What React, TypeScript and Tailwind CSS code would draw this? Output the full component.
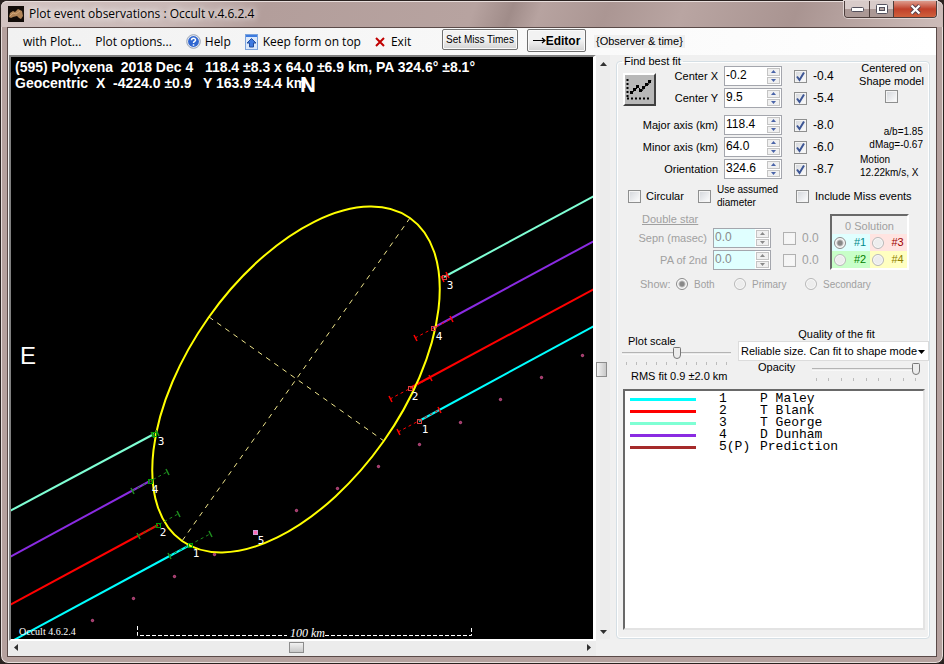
import { useState } from "react";
import type { ReactNode } from "react";

type Point = [number, number];

interface Chord {
  id: string;
  name: string;
  swatch: string;
}

const observers: Chord[] = [
  { id: "1", name: "P Maley", swatch: "bg-[#00ffff]" },
  { id: "2", name: "T Blank", swatch: "bg-[#ff0000]" },
  { id: "3", name: "T George", swatch: "bg-[#7fffd4]" },
  { id: "4", name: "D Dunham", swatch: "bg-[#8a2be2]" },
  { id: "5(P)", name: "Prediction", swatch: "bg-[#a52a2a]" },
];

const segments: { color: string; from: Point; to: Point }[] = [
  { color: "#7fffd4", from: [444, 277], to: [594, 196] },
  { color: "#8a2be2", from: [433, 328], to: [594, 241] },
  { color: "#ff0000", from: [410, 388], to: [594, 289] },
  { color: "#00ffff", from: [419, 421], to: [594, 326] },
  { color: "#7fffd4", from: [154, 434], to: [10, 511] },
  { color: "#8a2be2", from: [150, 481], to: [10, 557] },
  { color: "#ff0000", from: [158, 525], to: [10, 605] },
  { color: "#00ffff", from: [190, 545], to: [14, 640] },
];

const errorBars: { color: string; from: Point; to: Point; at: Point }[] = [
  { color: "#ff0000", from: [442, 279], to: [447, 275], at: [444, 277] },
  { color: "#ff0000", from: [415, 338], to: [451, 319], at: [433, 328] },
  { color: "#ff0000", from: [390, 399], to: [430, 378], at: [410, 388] },
  { color: "#ff0000", from: [398, 432], to: [439, 410], at: [419, 421] },
  { color: "#1e8c1e", from: [152, 435], to: [157, 433], at: [154, 434] },
  { color: "#1e8c1e", from: [132, 491], to: [167, 472], at: [150, 481] },
  { color: "#1e8c1e", from: [138, 536], to: [178, 514], at: [158, 525] },
  { color: "#1e8c1e", from: [169, 556], to: [210, 534], at: [190, 545] },
];

const predicted: Point[] = [
  [582, 355], [541, 377], [500, 399], [460, 422], [419, 444], [378, 466],
  [337, 488], [296, 510], [214, 554], [174, 576], [133, 598], [92, 620],
];

const labels: [string, number, number][] = [
  ["3", 450, 289], ["4", 439, 340], ["2", 415, 400], ["1", 425, 433],
  ["3", 161, 445], ["4", 155, 493], ["2", 163, 536], ["1", 196, 557], ["5", 261, 544],
];

function Plot() {
  return (
    <svg
      viewBox="11 57 582 582"
      preserveAspectRatio="xMidYMid slice"
      className="block h-full min-h-[582px] w-full bg-black"
      role="img"
      aria-label="Event observations plot"
    >
      {segments.map((s, i) => (
        <line key={i} x1={s.from[0]} y1={s.from[1]} x2={s.to[0]} y2={s.to[1]} stroke={s.color} strokeWidth="2" />
      ))}
      <g stroke="#f0e68c" strokeWidth="1" strokeDasharray="5 5">
        <line x1="410" y1="218" x2="182" y2="541" />
        <line x1="209" y1="317" x2="384" y2="441" />
      </g>
      <ellipse
        cx="296"
        cy="379.5"
        rx="197.7"
        ry="107.2"
        transform="rotate(-54.8 296 379.5)"
        fill="none"
        stroke="#ffff00"
        strokeWidth="2"
      />
      {errorBars.map((b, i) => (
        <g key={i} stroke={b.color} fill="none">
          <line x1={b.from[0]} y1={b.from[1]} x2={b.to[0]} y2={b.to[1]} strokeDasharray="3 3" />
          {[b.from, b.to].map(([x, y]) => (
            <line key={x} x1={x - 1} y1={y - 3} x2={x + 2} y2={y + 3} strokeWidth="1.5" />
          ))}
          <rect x={b.at[0] - 1.5} y={b.at[1] - 1.5} width="4" height="4" stroke={b.color === "#ff0000" ? "#e04040" : "#00a000"} />
        </g>
      ))}
      {predicted.map(([x, y]) => (
        <circle key={x} cx={x + 0.5} cy={y + 0.5} r="1.2" fill="#a03060" stroke="#d8609c" strokeWidth="0.8" />
      ))}
      <rect x="253.5" y="530.5" width="4" height="4" fill="#ff69b4" stroke="#c8a0d8" />

      <g fill="#ffffff" fontFamily="'DejaVu Sans Mono', monospace" fontSize="11" textAnchor="middle">
        {labels.map(([t, x, y]) => (
          <text key={`${t}-${x}`} x={x} y={y}>{t}</text>
        ))}
      </g>

      <g fill="#ffffff" fontFamily="'Liberation Sans', Arial, sans-serif" fontWeight="700">
        <text x="15" y="72" fontSize="14" className="whitespace-pre">
          {"(595) Polyxena  2018 Dec 4   118.4 ±8.3 x 64.0 ±6.9 km, PA 324.6° ±8.1°"}
        </text>
        <text x="15" y="88" fontSize="14" className="whitespace-pre">
          {"Geocentric  X  -4224.0 ±0.9   Y 163.9 ±4.4 km"}
        </text>
        <text x="300" y="92" fontSize="22">N</text>
        <text x="20" y="364" fontSize="24" fontWeight="400">E</text>
      </g>

      <path d="M137.5 626v9.5H287M325 635.5H471.5V626" fill="none" stroke="#ffffff" strokeDasharray="4 2" />
      <g fill="#ffffff" fontFamily="'Liberation Serif', 'Times New Roman', serif">
        <text x="290" y="637" fontSize="12" fontStyle="italic">100 km</text>
        <text x="19" y="635" fontSize="10">Occult 4.6.2.4</text>
      </g>
    </svg>
  );
}

function Arrow({ dir, className = "" }: { dir: "up" | "down" | "left" | "right"; className?: string }) {
  const d = {
    up: "M0 5 3.5 1 7 5z",
    down: "M0 1h7L3.5 5z",
    left: "M5 0v7L1 3.5z",
    right: "M1 0v7l4-3.5z",
  }[dir];
  const vertical = dir === "up" || dir === "down";
  return (
    <svg width={vertical ? 7 : 6} height={vertical ? 6 : 7} className={className} aria-hidden="true">
      <path d={d} fill="currentColor" />
    </svg>
  );
}

function Spin({ id, value, disabled = false }: { id: string; value: string; disabled?: boolean }) {
  const [text, setText] = useState(value);
  const step = (by: number) => setText((Number(text) + by).toFixed(1));
  return (
    <div className={`flex h-5 w-[58px] shrink-0 border border-[#a4a6ad] ${disabled ? "bg-[#e0ffff] text-[#8a8a8a]" : "bg-white"}`}>
      <input
        id={id}
        value={text}
        disabled={disabled}
        onChange={(e) => setText(e.target.value)}
        className="h-4 w-0 flex-1 bg-transparent pl-px text-xs leading-4 outline-none"
      />
      <div className={`flex w-[15px] flex-col gap-px bg-white p-px ${disabled ? "text-[#8a8a8a]" : "text-[#4a64a8]"}`}>
        <button type="button" aria-label="Increase" disabled={disabled} onClick={() => step(0.1)} className="flex flex-1 items-center justify-center border border-[#c4c4c4] bg-[#f0f0f0]">
          <svg width="5" height="3" aria-hidden="true"><path d="M0 3 2.5 0 5 3z" fill="currentColor" /></svg>
        </button>
        <button type="button" aria-label="Decrease" disabled={disabled} onClick={() => step(-0.1)} className="flex flex-1 items-center justify-center border border-[#c4c4c4] bg-[#f0f0f0]">
          <svg width="5" height="3" aria-hidden="true"><path d="M0 0h5L2.5 3z" fill="currentColor" /></svg>
        </button>
      </div>
    </div>
  );
}

function Check({ label, checked = false, disabled = false }: { label: string; checked?: boolean; disabled?: boolean }) {
  return (
    <span className="relative block size-[13px] shrink-0">
      <input
        type="checkbox"
        aria-label={label}
        defaultChecked={checked}
        disabled={disabled}
        className="peer block size-[13px] appearance-none border border-[#8e8f8f] bg-linear-to-br from-[#d2d5da] to-white shadow-[inset_0_0_0_1px_#f4f4f4] disabled:border-[#b1b1b1] disabled:from-[#f4f4f4] disabled:to-[#f8f8f8]"
      />
      <svg viewBox="0 0 13 13" className="pointer-events-none absolute inset-0 hidden size-[13px] peer-checked:block" aria-hidden="true">
        <path d="M3 6.5 5.5 10 10 2.5" fill="none" stroke="#3c5594" strokeWidth="2" />
      </svg>
    </span>
  );
}

function Radio({ name, label, checked = false }: { name: string; label: string; checked?: boolean }) {
  return (
    <input
      type="radio"
      name={name}
      aria-label={label}
      defaultChecked={checked}
      disabled
      className="size-3 shrink-0 appearance-none rounded-full border border-[#b8b8b8] bg-[#ededed] shadow-[inset_0_0_0_1px_#fafafa] checked:border-[#8c8c8c] checked:bg-[radial-gradient(circle,#888_0_2px,#f4f4f4_4px)]"
    />
  );
}

function ParamRow({ id, label, value, delta }: { id: string; label: string; value: string; delta: string }) {
  return (
    <div className="flex h-[22px] items-start">
      <label htmlFor={id} className="flex-1 pr-1.5 text-right leading-5">{label}</label>
      <Spin id={id} value={value} />
      <label className="flex h-5 w-[72px] items-center gap-1.5 pl-3 text-xs">
        <Check label={`Fit ${label}`} checked />
        {delta}
      </label>
    </div>
  );
}

function StarRow({ id, label }: { id: string; label: string }) {
  return (
    <div className="flex h-[22px] items-start">
      <label htmlFor={id} className="w-[90px] pr-1.5 text-right leading-5">{label}</label>
      <Spin id={id} value="0.0" disabled />
      <label className="flex h-5 items-center gap-1.5 pl-3 text-xs">
        <Check label={`Fit ${label}`} disabled />
        0.0
      </label>
    </div>
  );
}

const thumb =
  "[&::-webkit-slider-thumb]:h-3 [&::-webkit-slider-thumb]:w-2 [&::-webkit-slider-thumb]:appearance-none [&::-webkit-slider-thumb]:rounded-b-md [&::-webkit-slider-thumb]:rounded-t-xs [&::-webkit-slider-thumb]:border [&::-webkit-slider-thumb]:border-[#777777] [&::-webkit-slider-thumb]:bg-[#ececec]";

function Slider({ label, value, ticks }: { label: string; value: number; ticks: number }) {
  return (
    <div>
      <input
        type="range"
        aria-label={label}
        defaultValue={value}
        className={`block h-3 w-full appearance-none bg-[linear-gradient(#b4b4b4_1px,#e4e4e4_1px,#ffffff_3px)] bg-[length:100%_3px] bg-center bg-no-repeat ${thumb}`}
      />
      <div className="mx-1 mt-[3px] flex h-[3px] justify-between">
        {Array.from({ length: ticks }, (_, i) => (
          <span key={i} className="w-px bg-[#bcbcbc]" />
        ))}
      </div>
    </div>
  );
}

function MenuItem({ icon, children }: { icon?: ReactNode; children: ReactNode }) {
  return (
    <button type="button" className="flex items-center gap-1 whitespace-nowrap">
      {icon}
      {children}
    </button>
  );
}

function TitleBar() {
  return (
    <header className="flex h-[26px] items-start rounded-t-md bg-[linear-gradient(110deg,#d3c4c2_0%,#c9b8b6_18%,#b39e9b_28%,#b7a3a0_50%,#a08c89_54%,#b7a3a0_57%,#ab9693_64%,#b9a5a2_72%,#a99491_84%,#cdbcb9_100%)] pl-[7px] shadow-[inset_0_1px_0_#e8dedc]">
      <svg width="16" height="16" className="mt-[5px]" aria-hidden="true">
        <rect width="16" height="16" fill="#120c08" />
        <path d="M1 11 2 7l3-2 2 1 3-3 4 2 1 5-2 3-2-1-2-2-4 1-2 1z" fill="#b08457" />
        <path d="m2 10 3-3 3 1 4-3" fill="none" stroke="#d0a678" />
      </svg>
      <h1 className="mt-[5px] ml-[5px] flex-1 font-['Open_Sans',sans-serif] text-xs leading-4 text-black [text-shadow:0_0_6px_#fff,0_0_8px_#fff]">
        Plot event observations : Occult v.4.6.2.4
      </h1>
      <div className="mr-1.5 flex h-[17px] overflow-hidden rounded-b border border-t-0 border-[#4c3d3b] shadow-[0_0_0_1px_#e0d4d2]">
        <button type="button" aria-label="Minimize" className="flex w-[25px] items-center justify-center border-r border-[#4c3d3b] bg-linear-to-b from-[#d8cbc9] from-50% to-[#ab9895] to-50%">
          <svg width="13" height="6" aria-hidden="true"><rect x="0.5" y="1.5" width="12" height="4" rx="1" fill="#fff" stroke="#53505c" /></svg>
        </button>
        <button type="button" aria-label="Maximize" className="flex w-6 items-center justify-center border-r border-[#4c3d3b] bg-linear-to-b from-[#d8cbc9] from-50% to-[#ab9895] to-50%">
          <svg width="12" height="10" aria-hidden="true">
            <rect x="0.5" y="0.5" width="11" height="9" rx="1" fill="#fff" stroke="#53505c" />
            <rect x="3.5" y="3.5" width="5" height="3" fill="#b5a5a3" stroke="#53505c" />
          </svg>
        </button>
        <button type="button" aria-label="Close" className="flex w-[42px] items-center justify-center bg-linear-to-b from-[#dc9a8c] via-[#c0402a] via-50% to-[#d0603c]">
          <svg width="13" height="11" aria-hidden="true">
            <path d="m2.5 1.5 8 8m0-8-8 8" stroke="#53404c" strokeWidth="4" />
            <path d="m2.5 1.5 8 8m0-8-8 8" stroke="#fff" strokeWidth="2.2" />
          </svg>
        </button>
      </div>
    </header>
  );
}

function MenuBar() {
  return (
    <nav className="flex h-[27px] items-center bg-linear-to-r from-[#f1f1f1] to-white pl-[15px] font-['Open_Sans',sans-serif] text-xs">
      <div className="flex w-[419px] items-center gap-3.5">
        <MenuItem>with Plot...</MenuItem>
        <MenuItem>Plot options...</MenuItem>
        <MenuItem
          icon={
            <svg width="15" height="15" viewBox="0 0 15 15" aria-hidden="true">
              <circle cx="7.5" cy="7.5" r="6.8" fill="#e4e9f2" stroke="#9aa4b6" />
              <circle cx="7.5" cy="7.5" r="5.4" fill="#2f66d0" />
              <path d="M5.500 6.200c0-2.600 4.200-2.600 4 0C9.400 7.500 7.500 7.500 7.500 9M7.500 10.200v1.500" fill="none" stroke="#fff" strokeWidth="1.5" />
            </svg>
          }
        >
          Help
        </MenuItem>
        <MenuItem
          icon={
            <svg width="14" height="16" viewBox="0 0 14 16" aria-hidden="true">
              <rect x="0.5" y="0.5" width="12" height="15" fill="#dce9fb" stroke="#7ba3dc" />
              <path d="M1 1h11v2H1z" fill="#3d7be0" />
              <path d="m6.500 4.500 4.500 4.500H8.500v4h-4V9H2z" fill="#3f7ae0" stroke="#234f9e" />
            </svg>
          }
        >
          Keep form on top
        </MenuItem>
        <MenuItem
          icon={
            <svg width="10" height="10" className="mr-0.5" aria-hidden="true">
              <path d="m1 1 8 8M9 1 1 9" stroke="#c00000" strokeWidth="2" />
            </svg>
          }
        >
          Exit
        </MenuItem>
      </div>
      <div className="flex items-center font-['Liberation_Sans',Arial,sans-serif]">
        <button type="button" className="mb-1 h-[21px] w-[76px] rounded-xs border border-[#707070] bg-linear-to-b from-[#f2f2f2] from-50% to-[#d2d2d2] text-[10px] whitespace-nowrap shadow-[inset_0_0_0_1px_#fafafa]">
          Set Miss Times
        </button>
        <button type="button" className="mb-0.5 ml-[9px] flex h-[23px] w-[59px] items-center justify-center rounded-xs border border-[#707070] bg-linear-to-b from-[#f2f2f2] from-50% to-[#d2d2d2] text-xs font-bold shadow-[inset_0_0_0_1px_#fafafa]">
          <svg width="13" height="7" aria-hidden="true"><path d="M0 3.500h11M9 1l3 2.500L9 6" fill="none" stroke="#000" strokeWidth="1.2" /></svg>
          Editor
        </button>
        <span className="ml-2 bg-[#f0f0f0] px-0.5 text-[11px] leading-[13px] whitespace-nowrap">{"{Observer & time}"}</span>
      </div>
    </nav>
  );
}

function FitPanel() {
  return (
    <fieldset className="flex min-w-0 flex-1 flex-col rounded border border-[#d5dfe5] text-[11px] leading-[13px] shadow-[inset_0_0_0_1px_#fff]">
      <legend className="ml-[5px] px-0.5 leading-[10px]">Find best fit</legend>

      <div className="flex pl-1.5">
        <button type="button" aria-label="Find best fit" className="mt-[7px] size-[33px] border-2 border-t-white border-r-[#404040] border-b-[#404040] border-l-white bg-[#b8b8b8]">
          <svg width="29" height="29" viewBox="0 0 29 29" aria-hidden="true">
            <path d="M2.500 4v20M2 23.500h22" fill="none" stroke="#000" strokeWidth="2" strokeDasharray="2 2" />
            <path d="m5 18 4-2 4-4 4 4 3-5 3-1 3-5" fill="none" stroke="#000" />
            <path d="M5 16h3v3H5zM8 13h3v3H8zM11 10h3v3h-3zM14 14h3v3h-3zM17 11h3v3h-3zM20 8h3v3h-3zM23 5h3v3h-3z" />
          </svg>
        </button>
        <div className="flex-1">
          <ParamRow id="cx" label="Center X" value="-0.2" delta="-0.4" />
          <ParamRow id="cy" label="Center Y" value="9.5" delta="-5.4" />
        </div>
        <label className="flex w-[75px] flex-col items-center text-center whitespace-nowrap">
          <span className="-mt-1">Centered on</span>
          <span className="mb-0.5">Shape model</span>
          <Check label="Centered on shape model" />
        </label>
      </div>

      <div className="mt-[5px] flex pl-1.5">
        <div className="flex-1">
          <ParamRow id="major" label="Major axis (km)" value="118.4" delta="-8.0" />
          <ParamRow id="minor" label="Minor axis (km)" value="64.0" delta="-6.0" />
          <ParamRow id="orient" label="Orientation" value="324.6" delta="-8.7" />
        </div>
        <div className="w-[75px] pt-2.5 pr-1.5 text-[10px] leading-[13px] whitespace-nowrap">
          <p className="text-right">a/b=1.85</p>
          <p className="text-right">dMag=-0.67</p>
          <p className="mt-0.5 pl-1.5">Motion</p>
          <p className="pl-1.5">12.22km/s, X</p>
        </div>
      </div>

      <div className="mt-0.5 flex h-[26px] items-center pl-[11px] whitespace-nowrap">
        <label className="flex w-[70px] items-center gap-[5px]"><Check label="Circular" />Circular</label>
        <label className="flex w-[98px] items-center gap-1.5 text-[10px] leading-[13px]">
          <Check label="Use assumed diameter" />
          <span>Use assumed<br />diameter</span>
        </label>
        <label className="flex items-center gap-1.5"><Check label="Include Miss events" />Include Miss events</label>
      </div>

      <div className="flex justify-between pr-5 pl-1.5 text-[#a0a0a0]">
        <div>
          <p className="mt-1 mb-0.5 pl-[19px] underline">Double star</p>
          <StarRow id="sepn" label="Sepn (masec)" />
          <StarRow id="pa" label="PA of 2nd" />
        </div>
        <div className="mt-[5px] flex h-14 w-[79px] flex-col border-2 border-t-[#696969] border-r-white border-b-white border-l-[#696969]">
          <p className="flex-1 pt-1 text-center">0 Solution</p>
          <div className="grid grid-cols-2 text-[11px]">
            <label className="flex h-[17px] items-center gap-2 bg-[#e0ffff] pl-0.5 text-[#008b8b]"><Radio name="sol" label="#1" checked />#1</label>
            <label className="flex h-[17px] items-center gap-2 bg-[#ffe4e1] pl-0.5 text-[#a00000]"><Radio name="sol" label="#3" />#3</label>
            <label className="flex h-[17px] items-center gap-2 bg-[#c8ffc8] pl-0.5 text-[#008000]"><Radio name="sol" label="#2" />#2</label>
            <label className="flex h-[17px] items-center gap-2 bg-[#ffffc0] pl-0.5 text-[#908000]"><Radio name="sol" label="#4" />#4</label>
          </div>
        </div>
      </div>

      <div className="mt-1 flex h-4 items-center pl-[23px] text-[#a0a0a0]">
        <span className="w-9">Show:</span>
        <label className="flex w-[58px] items-center gap-1.5 text-[10px]"><Radio name="show" label="Both" checked />Both</label>
        <label className="flex w-[71px] items-center gap-1.5 text-[10px]"><Radio name="show" label="Primary" />Primary</label>
        <label className="flex items-center gap-1.5 text-[10px]"><Radio name="show" label="Secondary" />Secondary</label>
      </div>

      <div className="mt-9 flex pl-[5px]">
        <div className="w-[109px] pt-[7px]">
          <p className="pl-1.5 leading-3">Plot scale</p>
          <Slider label="Plot scale" value={50} ticks={11} />
          <p className="mt-[5px] pl-[9px] leading-[13px] whitespace-nowrap">RMS fit 0.9 ±2.0 km</p>
        </div>
        <div className="ml-[7px] flex-1">
          <label htmlFor="quality" className="block pl-1.5 text-center">Quality of the fit</label>
          <div className="relative">
            <select id="quality" className="h-5 w-full appearance-none border border-[#dcdcdc] bg-white pl-0.5 text-[11px]">
              <option>Reliable size. Can fit to shape mode</option>
            </select>
            <Arrow dir="down" className="pointer-events-none absolute top-2 right-1" />
          </div>
          <div className="flex pr-[9px] pl-5">
            <span className="w-[54px]">Opacity</span>
            <div className="flex-1 pt-0.5"><Slider label="Opacity" value={100} ticks={9} /></div>
          </div>
        </div>
      </div>

      <div className="mt-1.5 mr-1 mb-2 ml-1.5 flex-1 border-2 border-t-[#696969] border-r-[#e3e3e3] border-b-[#e3e3e3] border-l-[#696969] bg-white pt-0.5 pl-[5px]">
        <table className="font-['Liberation_Mono','Courier_New',monospace] text-[13px] leading-3">
          <tbody>
            {observers.map((o) => (
              <tr key={o.id} className="h-3">
                <td className="w-[89px] p-0"><span className={`block h-[3px] w-[66px] ${o.swatch}`} /></td>
                <td className="w-[41px] p-0">{o.id}</td>
                <td className="p-0">{o.name}</td>
              </tr>
            ))}
          </tbody>
        </table>
      </div>
    </fieldset>
  );
}

export default function App() {
  return (
    <div className="bg-[#2a2220]">
      <div className="flex min-h-screen w-full flex-col rounded-lg border border-[#2a2220] bg-[#b5a19e] font-['Liberation_Sans',Arial,sans-serif] text-black shadow-[inset_0_0_0_1px_#e8dedc]">
        <TitleBar />
        <div className="mx-1.5 mb-1.5 flex flex-1 flex-col border border-[#5a4a48] bg-[#f0f0f0]">
          <MenuBar />
          <main className="flex flex-1">
            <div className="flex min-w-0 flex-1 flex-col pl-px">
              <div className="flex-1 border-2 border-t-[#808080] border-r-[3px] border-r-white border-b-white border-l-[#808080]">
                <Plot />
              </div>
              <div className="flex h-[15px] items-center bg-[#ececec] px-1 pb-0.5 text-[#303030]">
                <button type="button" aria-label="Scroll left"><Arrow dir="left" /></button>
                <div className="flex-[49]" />
                <div className="h-[11px] w-[15px] border border-[#8c8c8c] bg-linear-to-b from-[#f2f2f2] to-[#c8c8c8]" />
                <div className="flex-[51]" />
                <button type="button" aria-label="Scroll right"><Arrow dir="right" /></button>
              </div>
            </div>
            <div className="mb-[17px] flex w-[14px] flex-col items-center bg-[#ececec] pt-1.5 pb-1 text-[#303030]">
              <button type="button" aria-label="Scroll up"><Arrow dir="up" /></button>
              <div className="flex-[54]" />
              <div className="h-[15px] w-[11px] self-start border border-[#8c8c8c] bg-linear-to-r from-[#f2f2f2] to-[#c8c8c8]" />
              <div className="flex-[46]" />
              <button type="button" aria-label="Scroll down"><Arrow dir="down" /></button>
            </div>
            <aside className="mr-1.5 mb-[17px] ml-1.5 flex w-[314px] shrink-0 pt-px">
              <FitPanel />
            </aside>
          </main>
        </div>
      </div>
    </div>
  );
}
